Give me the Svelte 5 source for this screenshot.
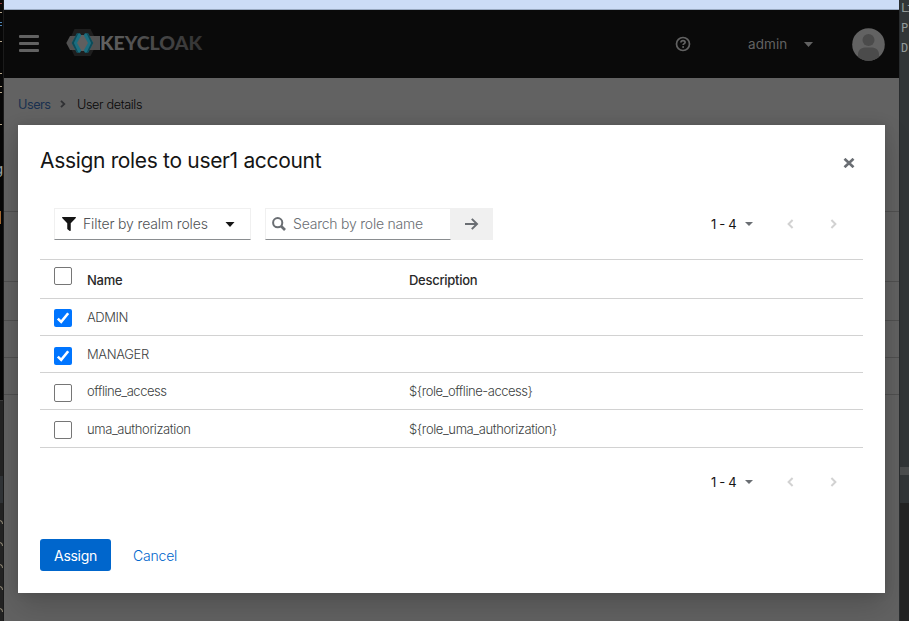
<script>
  const rows = [
    { name: 'ADMIN', desc: '', on: true, box: 10, text: 9, h: 37, ls: -0.45 },
    { name: 'MANAGER', desc: '', on: true, box: 11, text: 9, h: 37, ls: -0.35 },
    { name: 'offline_access', desc: '${role_offline-access}', on: false, box: 11, text: 9, h: 37, ls: -0.46 },
    { name: 'uma_authorization', desc: '${role_uma_authorization}', on: false, box: 11, text: 10, h: 38, ls: -0.4 }
  ];
  const rules = [211, 281, 320, 357, 394];
  const leftMarks = [
    [3, '#8b3b3b'], [12, '#b5a58a'], [22, '#4f86b8'], [25, '#4f86b8'], [41, '#b5a58a'], [73, '#b5a58a'],
    [86, '#b5a58a'], [92, '#b5a58a'], [124, '#b5a58a']
  ];
  const curls = [520, 542, 564, 586, 608];
</script>

{#snippet pager(cls)}
  <div class="pager {cls}">
    <span class="range">1 - 4</span>
    <svg class="pc" width="8" height="4" viewBox="0 0 8 4"><path d="M0 0h8L4 4z" fill="#6a6e73" /></svg>
    <svg class="prev" width="7" height="10" viewBox="0 0 7 10"><path d="M5.600 1L1.600 5l4 4" fill="none" stroke="#d2d2d2" stroke-width="2" /></svg>
    <svg class="next" width="7" height="10" viewBox="0 0 7 10"><path d="M1.400 1l4 4-4 4" fill="none" stroke="#d2d2d2" stroke-width="2" /></svg>
  </div>
{/snippet}

<div class="screen">
  <div class="left">
    {#each leftMarks as [y, c]}<i class="mark" style="top:{y}px;background:{c}"></i>{/each}
    <b class="g">g</b>
    <i class="orange"></i>
    <i class="band"></i>
    {#each curls as y}<i class="curl" style="top:{y}px"></i>{/each}
  </div>
  <div class="page">
    <div class="chrome"></div>
    <header>
      <div class="burger"><i></i><i></i><i></i></div>
      <svg class="logo" width="137" height="28" viewBox="0 0 137 28">
        <defs>
          <linearGradient id="kg" x1="34" x2="136" y1="0" y2="0" gradientUnits="userSpaceOnUse">
            <stop offset="0" stop-color="#626262" /><stop offset="1" stop-color="#333" />
          </linearGradient>
        </defs>
        <path d="M8.500 0h16l7 13.700-7 13.300h-16L2 13.700z" fill="#1e1e1e" />
        <path d="M4 7H34v14H4L.3 14z" fill="#515151" />
        <path d="M14 6h5l5 8-5 8h-5l-4-8z" fill="#5f5f5f" />
        <path d="M10.800 4.500l3.200-.3 1.300 2L11 14l4.300 7.500-1.300 2.200-3.200-.2L5.800 14z" fill="#1b6e80" />
        <path d="M22.200 4.500l-3.200-.3-1.300 2L22 14l-4.300 7.500 1.300 2.200 3.200-.2 5-9.500z" fill="#1b6e80" />
        <path d="M10.800 4.500L5.800 14l5 9.500 1.500.1L7.900 14l4.400-9.600zM22.200 4.500l5 9.500-5 9.500-1.500.1 4.400-9.600-4.400-9.600z" fill="#0e4a57" />
        <text x="34" y="21.300" textLength="102" lengthAdjust="spacingAndGlyphs" fill="url(#kg)" class="brand">KEYCLOAK</text>
      </svg>
      <svg class="help" width="16" height="16" viewBox="0 0 16 16"><circle cx="8" cy="8" r="6.500" fill="none" stroke="#626262" stroke-width="1.700" /><path d="M5.900 6.500C6 5.300 6.800 4.700 8 4.700c1.300 0 2.100.7 2.100 1.700C10.100 7.700 8.100 7.600 8.100 9.100" fill="none" stroke="#626262" stroke-width="1.700" /><circle cx="8.100" cy="11.100" r="1" fill="#626262" /></svg>
      <span class="admin">admin</span>
      <svg class="ac" width="9" height="5" viewBox="0 0 9 5"><path d="M0 0h9L4.500 5z" fill="#626262" /></svg>
      <svg class="avatar" width="33" height="33" viewBox="0 0 33 33">
        <defs><clipPath id="av"><circle cx="16.500" cy="16.500" r="16.300" /></clipPath></defs>
        <circle cx="16.500" cy="16.500" r="16.300" fill="#626262" />
        <g clip-path="url(#av)" fill="#4b4b4b"><circle cx="16.500" cy="12" r="6" /><path d="M6 34v-7c0-5 3-7 6.500-7.500h8C24 20 27 22 27 27v7z" /></g>
      </svg>
    </header>
    <nav>
      <span class="users">Users</span>
      <svg width="6" height="8" viewBox="0 0 6 8"><path d="M1 .8L4.300 4 1 7.200" fill="none" stroke="#303134" stroke-width="1.800" /></svg>
      <span class="details">User details</span>
    </nav>
    {#each rules as y}<i class="rule" style="top:{y}px"></i>{/each}
  </div>
  <div class="right">
    <span>Li</span><span>P</span><span>D</span>
    <i class="grip"></i><i class="dark"></i>
  </div>

  <section class="modal">
    <div class="title">
      <h1>Assign roles to user1 account</h1>
      <svg width="12" height="10" viewBox="0 0 12 10"><path d="M1.500 .8l9 8.400M10.500 .8l-9 8.400" stroke="#6a6e73" stroke-width="2.700" /></svg>
    </div>
    <div class="toolbar">
      <div class="filter">
        <svg width="14" height="14" viewBox="0 0 512 512"><path fill="#151515" d="M488 0H24C3 0-8 26 7 41l185 185v206c0 8 4 15 10 20l80 56c16 11 38 0 38-20V226L505 41c15-15 4-41-17-41z" /></svg>
        <span>Filter by realm roles</span>
        <svg class="fc" width="10" height="5" viewBox="0 0 10 5"><path d="M.5 0h9L5 5z" fill="#151515" /></svg>
      </div>
      <div class="search">
        <svg width="14" height="14" viewBox="0 0 14 14"><circle cx="5.700" cy="5.700" r="4.600" fill="none" stroke="#6a6e73" stroke-width="2" /><path d="M9 9l4 4" stroke="#6a6e73" stroke-width="2.600" /></svg>
        <span>Search by role name</span>
      </div>
      <div class="go"><svg width="14" height="12" viewBox="0 0 14 12"><path d="M0 6h12M6.800 .9L12 6l-5.200 5.100" fill="none" stroke="#6a6e73" stroke-width="2" /></svg></div>
      {@render pager('top')}
    </div>
    <div class="table">
      <div class="row head">
        <i class="box" style="margin-top:7px"></i>
        <span class="name">Name</span><span class="desc">Description</span>
      </div>
      {#each rows as r}
        <div class="row" style="height:{r.h}px;letter-spacing:{r.ls}px">
          <i class="box" class:on={r.on} style="margin-top:{r.box}px">
            {#if r.on}<svg width="18" height="18" viewBox="0 0 18 18"><path d="M3.800 9.600l3.400 3.300 7-8.600" fill="none" stroke="#fff" stroke-width="2.600" /></svg>{/if}
          </i>
          <span class="name" style="padding-top:{r.text}px">{r.name}</span>
          <span class="desc" style="padding-top:{r.text}px">{r.desc}</span>
        </div>
      {/each}
    </div>
    {@render pager('bottom')}
    <footer><button class="assign">Assign</button><button class="cancel">Cancel</button></footer>
  </section>
</div>

<style>
  :global(body) { margin: 0; background: #626262; }
  .screen { position: relative; display: flex; width: 909px; height: 621px; overflow: hidden; font-family: "Inter", "Noto Sans", sans-serif; }
  .screen * { box-sizing: border-box; }
  svg { display: block; flex: none; }
  i { display: block; }
  .left { position: relative; width: 4px; height: 621px; overflow: hidden; background: linear-gradient(#070707 0 400px, #3a3a3a 400px 401px, #232323 401px); border-right: 1px solid #1b1b1b; }
  .mark { position: absolute; left: 0; width: 2px; height: 1px; }
  .g { position: absolute; left: -5px; top: 161px; font: 14px "DejaVu Sans Mono", monospace; color: #9aa6a8; }
  .orange { position: absolute; left: 0; top: 211px; width: 1px; height: 13px; background: #a86b32; }
  .band { position: absolute; left: 0; top: 476px; width: 4px; height: 27px; background: #303437; }
  .curl { position: absolute; left: -2px; width: 5px; height: 4px; border: 1px solid #8b8473; border-left: 0; border-bottom: 0; border-radius: 0 4px 0 0; }
  .page { position: relative; width: 895px; background: #626262; }
  .chrome { height: 10px; background: #ccdcf6; border-bottom: 1px solid #98a8bf; }
  header { display: flex; height: 68px; background: #0a0a0a; }
  .burger { margin: 25px 0 0 15px; width: 20px; }
  .burger i { height: 3px; margin-bottom: 4px; border-radius: 1px; background: #626262; }
  .logo { margin: 19px 0 0 27px; }
  .brand { font: 900 19.500px "Lato", sans-serif; }
  .help { margin: 26px 0 0 472px; }
  .admin { margin: 25px 0 0 57px; width: 56px; font-size: 13.500px; line-height: 18px; letter-spacing: .1px; color: #626262; }
  .ac { margin: 32px 0 0; }
  .avatar { margin: 18px 0 0 39px; }
  nav { display: flex; align-items: center; height: 52px; padding-left: 14px; font-size: 12.700px; }
  .users { width: 42px; color: #19304f; letter-spacing: -.5px; }
  .details { margin-left: 11px; color: #080808; letter-spacing: -.38px; font-weight: 350; }
  .rule { position: absolute; left: 0; width: 895px; height: 1px; background: #505050; }
  .right { position: relative; width: 10px; overflow: hidden; background: #313537; border-left: 1px solid #292c2e; color: #929998; font: 12px/20px "DejaVu Sans Mono", monospace; padding: 0 0 0 1px; }
  .right span { display: block; position: relative; top: -2px; letter-spacing: -2px; white-space: nowrap; }
  .grip { position: absolute; left: 0; top: 467px; width: 9px; height: 8px; background: #4b4d4e; }
  .dark { position: absolute; left: 0; top: 503px; width: 9px; height: 118px; background: #232323; }
  .modal { position: absolute; left: 18px; top: 125px; width: 867px; height: 468px; padding: 0 22px; background: #fff; box-shadow: 0 14px 28px rgba(3, 3, 3, .17), 0 0 10px rgba(3, 3, 3, .12); }
  .title { display: flex; justify-content: space-between; height: 83px; padding: 21px 8px 0 0; }
  h1 { margin: 0; font-size: 21px; line-height: 30px; font-weight: 400; letter-spacing: -.33px; color: #151515; white-space: nowrap; }
  .title svg { margin-top: 12px; }
  .toolbar { display: flex; height: 51px; padding-left: 14px; }
  .filter, .search { display: flex; align-items: center; height: 32px; border: 1px solid #f0f0f0; border-bottom-color: #8a8d90; font-size: 14px; line-height: 18px; padding-left: 7px; white-space: nowrap; }
  .filter { width: 197px; color: #4f5255; }
  .filter span { margin: 0 0 1px 7px; width: 142px; letter-spacing: -.15px; font-weight: 300; }
  .search { width: 186px; margin-left: 14px; padding-left: 6px; color: #6a6e73; }
  .search span { margin: 0 0 1px 7px; font-weight: 300; letter-spacing: -.22px; }
  .go { display: flex; align-items: center; width: 42px; height: 32px; padding-left: 14px; background: #f0f0f0; }
  .pager { display: flex; align-items: center; height: 20px; font-size: 13px; color: #151515; }
  .top { margin: 6px 0 0 218px; }
  .bottom { margin: 24px 0 0 671px; }
  .range { width: 34px; margin-bottom: 1px; letter-spacing: -.35px; white-space: nowrap; }
  .prev { margin-left: 34px; }
  .next { margin-left: 36px; }
  .table { border-top: 1px solid #d2d2d2; font-size: 13px; line-height: 18px; color: #3d3f42; }
  .row { display: flex; height: 37px; padding-left: 14px; border-bottom: 1px solid #d2d2d2; font-weight: 300; }
  .head { height: 39px; font-weight: 500; color: #292929; letter-spacing: -.28px; }
  .head span { padding-top: 11px; }
  .box { width: 18px; height: 18px; border: 1px solid #767676; border-radius: 2px; flex: none; }
  .on { border: 0; background: #0075ff; }
  .name { width: 322px; margin-left: 15px; }
  footer { display: flex; margin-top: 47px; }
  button { border: 0; padding: 0; height: 32px; font: 14px "Inter", sans-serif; }
  .assign { width: 71px; border-radius: 3px; background: #06c; color: #fff; letter-spacing: -.3px; }
  .cancel { margin-left: 22px; background: none; color: #06c; font-weight: 300; letter-spacing: -.2px; }
</style>
